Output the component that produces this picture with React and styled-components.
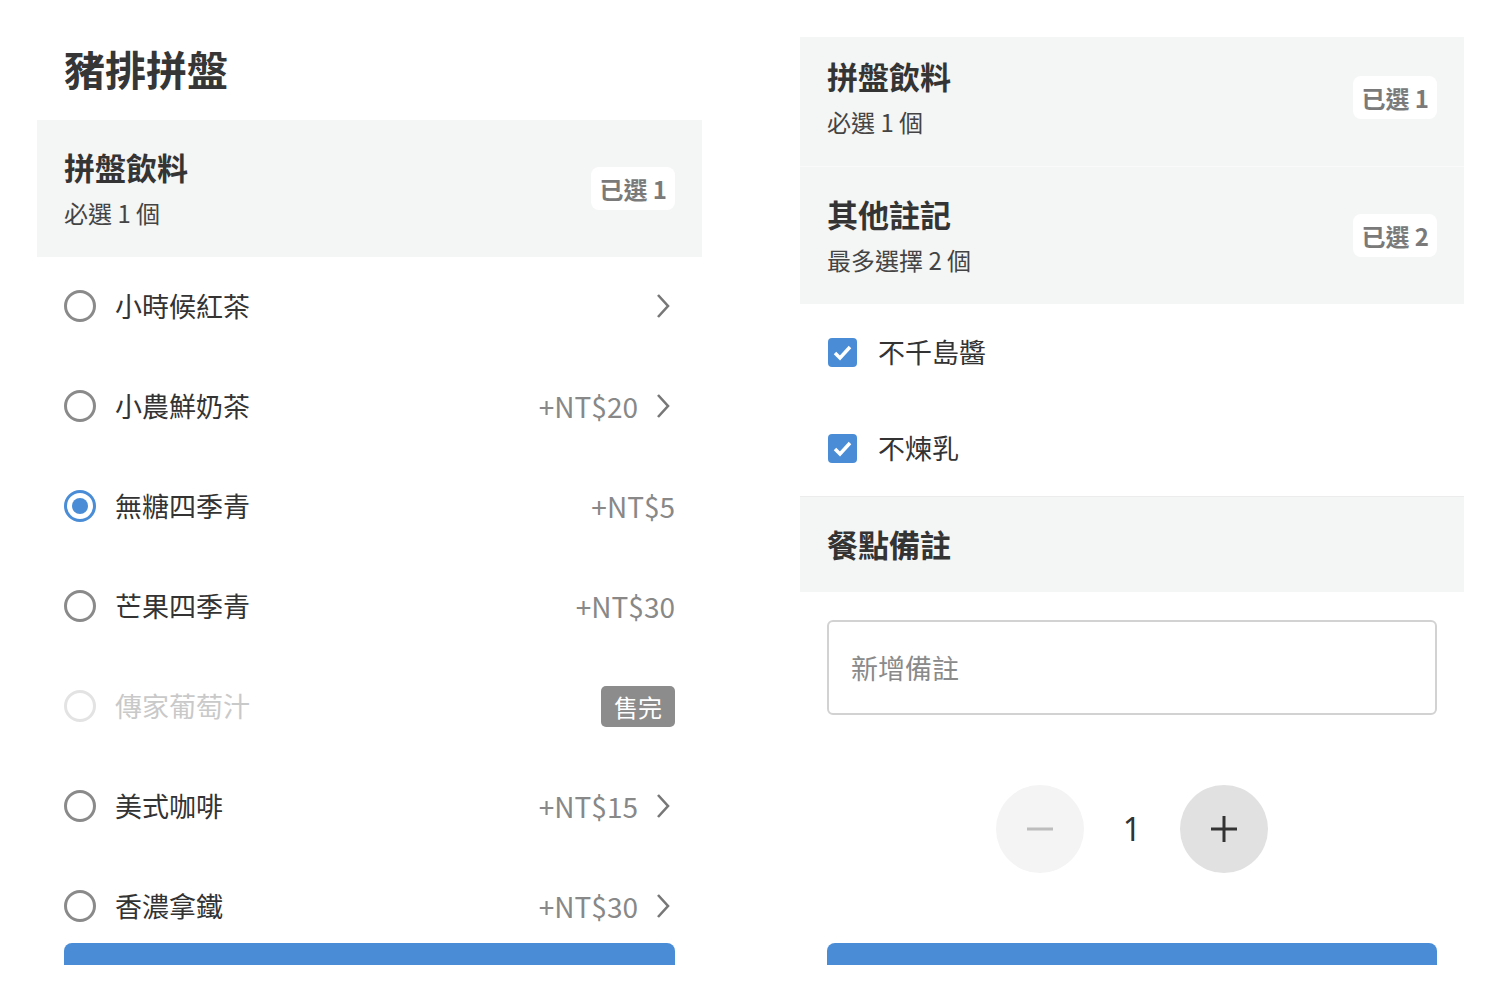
import React from "react";
import styled, { createGlobalStyle } from "styled-components";

const GlobalStyle = createGlobalStyle`
  html, body { margin: 0; padding: 0; background: #ffffff; }
  body {
    font-family: "Noto Sans CJK TC", "Noto Sans", "Liberation Sans", sans-serif;
    color: #333;
  }
  * { box-sizing: border-box; }
`;

const BLUE = "#4a8dd6";

const Page = styled.div`
  display: flex;
  align-items: flex-start;
  gap: 98px;
  padding-left: 37px;
  height: 1000px;
  overflow: hidden;
`;

const Panel = styled.div`
  position: relative;
  overflow: hidden;
  width: ${(p) => p.$w}px;
  height: ${(p) => p.$h}px;
  margin-top: ${(p) => p.$top || 0}px;
  display: flex;
  flex-direction: column;
  background: #fff;
`;

const TitleBar = styled.h1`
  margin: 0;
  padding: 40px 27px 24px;
  font-size: 41px;
  line-height: 56px;
  font-weight: 700;
  color: #363636;
`;

const SectionHeader = styled.div`
  display: flex;
  align-items: center;
  justify-content: space-between;
  flex-shrink: 0;
  background: #f4f5f5;
  padding: 27px 27px ${(p) => (p.$compact ? 28 : 27)}px;
  margin-top: ${(p) => p.$shift || 0}px;
  border-top: ${(p) => (p.$line ? `1px solid ${p.$line}` : "none")};
`;

const HeaderText = styled.div`
  display: flex;
  flex-direction: column;
`;

const HeaderTitle = styled.div`
  font-size: 31px;
  line-height: 40px;
  font-weight: 700;
  color: #343434;
`;

const HeaderSub = styled.div`
  margin-top: 9px;
  font-size: 24px;
  line-height: 34px;
  color: #444;
`;

const Badge = styled.div`
  background: #fff;
  border-radius: 8px;
  padding: 0 8px;
  height: 43px;
  line-height: 43px;
  font-size: 24px;
  font-weight: 700;
  color: #7a7a7a;
`;

const OptionRow = styled.div`
  height: 100px;
  flex-shrink: 0;
  display: flex;
  align-items: center;
  gap: 19px;
  padding: 0 27px 2px;
`;

const Radio = styled.div`
  width: 32px;
  height: 32px;
  flex-shrink: 0;
  border-radius: 50%;
  border: 3px solid ${(p) => (p.$checked ? BLUE : p.$disabled ? "#e3e3e3" : "#8a8a8a")};
  display: flex;
  align-items: center;
  justify-content: center;
  &::after {
    content: "";
    display: ${(p) => (p.$checked ? "block" : "none")};
    width: 16px;
    height: 16px;
    border-radius: 50%;
    background: ${BLUE};
  }
`;

const OptionLabel = styled.div`
  flex: 1;
  font-size: 27px;
  line-height: 38px;
  color: ${(p) => (p.$disabled ? "#c9c9c9" : "#333")};
`;

const Price = styled.div`
  font-size: 28px;
  line-height: 38px;
  color: #888;
`;

const ChevronBox = styled.svg`
  width: 20px;
  height: 26px;
  margin-left: -2px;
  flex-shrink: 0;
`;

const SoldOut = styled.div`
  background: #8c8c8c;
  color: #fff;
  border-radius: 5px;
  height: 41px;
  line-height: 41px;
  padding: 0 13px;
  font-size: 24px;
`;

const CheckRow = styled.div`
  height: 96px;
  flex-shrink: 0;
  display: flex;
  align-items: center;
  gap: 21px;
  padding: 0 28px;
`;

const CheckBox = styled.div`
  width: 29px;
  height: 29px;
  border-radius: 4px;
  background: ${BLUE};
  display: flex;
  align-items: center;
  justify-content: center;
  flex-shrink: 0;
`;

const CheckLabel = styled.div`
  font-size: 27px;
  line-height: 38px;
  color: #333;
`;

const NoteInput = styled.textarea`
  display: block;
  flex-shrink: 0;
  margin: 28px 27px 0;
  height: 95px;
  border: 2px solid #d2d2d2;
  border-radius: 6px;
  padding: 27px 22px 0;
  font-family: inherit;
  font-size: 27px;
  line-height: 38px;
  color: #333;
  resize: none;
  outline: none;
  background: #fff;
  &::placeholder { color: #8a8a8a; }
`;

const QtyRow = styled.div`
  margin-top: 70px;
  display: flex;
  justify-content: center;
  align-items: center;
  gap: 24px;
`;

const QtyButton = styled.div`
  width: 88px;
  height: 88px;
  border-radius: 50%;
  background: ${(p) => p.$bg};
  display: flex;
  align-items: center;
  justify-content: center;
`;

const QtyValue = styled.div`
  width: 48px;
  text-align: center;
  font-size: 32px;
  line-height: 40px;
  color: #333;
  font-family: "Noto Sans", "Noto Sans CJK TC", sans-serif;
  font-weight: 400;
`;

const Footer = styled.div`
  position: absolute;
  left: 0;
  right: 0;
  bottom: 0;
  padding: 0 27px;
`;

const SubmitBar = styled.div`
  height: 22px;
  border-radius: 8px 8px 0 0;
  background: ${BLUE};
`;

const Chevron = () => (
  <ChevronBox viewBox="0 0 20 26">
    <polyline points="3,2 13,13 3,24" fill="none" stroke="#777" strokeWidth="2.6" />
  </ChevronBox>
);

const options = [
  { name: "小時候紅茶", price: "", arrow: true },
  { name: "小農鮮奶茶", price: "+NT$20", arrow: true },
  { name: "無糖四季青", price: "+NT$5", checked: true },
  { name: "芒果四季青", price: "+NT$30" },
  { name: "傳家葡萄汁", soldOut: true },
  { name: "美式咖啡", price: "+NT$15", arrow: true },
  { name: "香濃拿鐵", price: "+NT$30", arrow: true },
];

const Header = ({ title, sub, badge, shift, line }) => (
  <SectionHeader $shift={shift} $line={line} $compact={!sub}>
    <HeaderText>
      <HeaderTitle>{title}</HeaderTitle>
      {sub && <HeaderSub>{sub}</HeaderSub>}
    </HeaderText>
    {badge && <Badge>{badge}</Badge>}
  </SectionHeader>
);

export default function App() {
  return (
    <>
      <GlobalStyle />
      <Page>
        <Panel $w={665} $h={965}>
          <TitleBar>豬排拼盤</TitleBar>
          <Header title="拼盤飲料" sub="必選 1 個" badge="已選 1" />
          {options.map((o) => (
            <OptionRow key={o.name}>
              <Radio $checked={o.checked} $disabled={o.soldOut} />
              <OptionLabel $disabled={o.soldOut}>{o.name}</OptionLabel>
              {o.price && <Price>{o.price}</Price>}
              {o.soldOut && <SoldOut>售完</SoldOut>}
              {o.arrow && <Chevron />}
            </OptionRow>
          ))}
          <Footer>
            <SubmitBar />
          </Footer>
        </Panel>

        <Panel $w={664} $h={928} $top={37}>
          <Header title="拼盤飲料" sub="必選 1 個" badge="已選 1" shift={-8} />
          <Header title="其他註記" sub="最多選擇 2 個" badge="已選 2" line="#fafafa" />
          {["不千島醬", "不煉乳"].map((t) => (
            <CheckRow key={t}>
              <CheckBox>
                <svg width="29" height="29" viewBox="0 0 29 29">
                  <polyline points="7,15 12,20 22,9" fill="none" stroke="#fff" strokeWidth="3.5" />
                </svg>
              </CheckBox>
              <CheckLabel>{t}</CheckLabel>
            </CheckRow>
          ))}
          <Header title="餐點備註" line="#ececec" />
          <NoteInput placeholder="新增備註" />
          <QtyRow>
            <QtyButton $bg="#f4f4f4">
              <svg width="30" height="30" viewBox="0 0 30 30">
                <line x1="2" y1="15" x2="28" y2="15" stroke="#bdbdbd" strokeWidth="3" />
              </svg>
            </QtyButton>
            <QtyValue>1</QtyValue>
            <QtyButton $bg="#e1e1e1">
              <svg width="30" height="30" viewBox="0 0 30 30">
                <line x1="2" y1="15" x2="28" y2="15" stroke="#333" strokeWidth="3" />
                <line x1="15" y1="2" x2="15" y2="28" stroke="#333" strokeWidth="3" />
              </svg>
            </QtyButton>
          </QtyRow>
          <Footer>
            <SubmitBar />
          </Footer>
        </Panel>
      </Page>
    </>
  );
}
